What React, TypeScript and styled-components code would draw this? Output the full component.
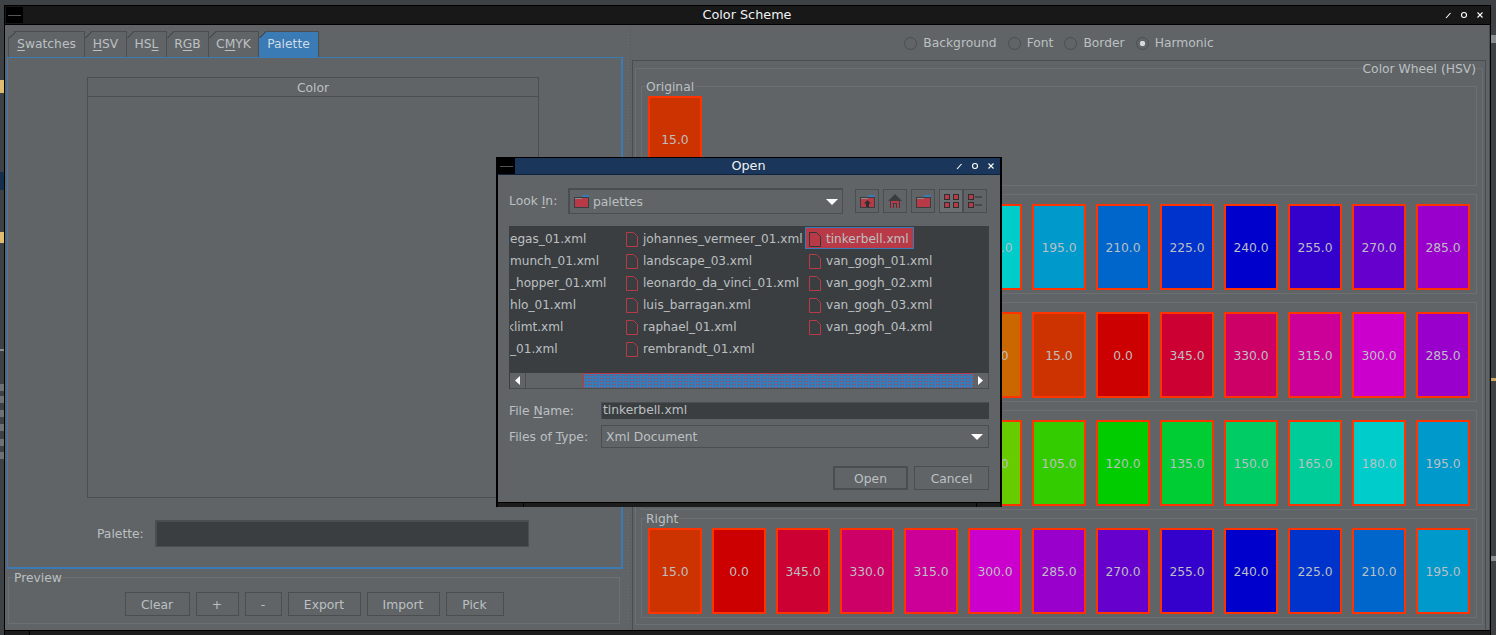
import { ReactNode } from 'react'
import styled, { createGlobalStyle } from 'styled-components'

const LINE = '#4a4e51'
const SOFT = '#6b6f72'
const BG = '#606467'
const DARK = '#3b3e41'
const BLUE = '#3a7ab5'
const RED = '#b83a46'
const TEXT = '#bcc0c2'

const hueColor = (hue: number) => {
  const channel = (n: number) => {
    const k = (n + hue / 60) % 6
    return Math.round(204 * (1 - Math.max(0, Math.min(k, 4 - k, 1))))
  }
  return `rgb(${channel(5)}, ${channel(3)}, ${channel(1)})`
}

const wheelRow = (start: number, step: number) =>
  Array.from({ length: 13 }, (_, i) => (start + step * i + 360) % 360)

// the first five swatches of these rows sit behind the Open dialog
const WHEEL_ROWS = [
  { label: '\u00a0', hues: wheelRow(105, 15), covered: 5 },
  { label: '\u00a0', hues: wheelRow(105, -15), covered: 5 },
  { label: '\u00a0', hues: wheelRow(15, 15), covered: 5 },
  { label: 'Right', hues: wheelRow(15, -15), covered: 0 },
]

const FILES = [
  { name: 'egas_01.xml', column: 0 },
  { name: 'munch_01.xml', column: 0 },
  { name: '_hopper_01.xml', column: 0 },
  { name: 'hlo_01.xml', column: 0 },
  { name: 'klimt.xml', column: 0, cut: true },
  { name: '_01.xml', column: 0 },
  { name: 'johannes_vermeer_01.xml', column: 1 },
  { name: 'landscape_03.xml', column: 1 },
  { name: 'leonardo_da_vinci_01.xml', column: 1 },
  { name: 'luis_barragan.xml', column: 1 },
  { name: 'raphael_01.xml', column: 1 },
  { name: 'rembrandt_01.xml', column: 1 },
  { name: 'tinkerbell.xml', column: 2, selected: true },
  { name: 'van_gogh_01.xml', column: 2 },
  { name: 'van_gogh_02.xml', column: 2 },
  { name: 'van_gogh_03.xml', column: 2 },
  { name: 'van_gogh_04.xml', column: 2 },
]

const AppIcon = () => (
  <svg width="17" height="16" viewBox="0 0 17 16">
    <rect width="17" height="16" fill="#000" />
    <rect x="2" y="8" width="13" height="1" fill="#555" />
  </svg>
)

const WindowButtons = () => (
  <svg width="44" height="10" viewBox="0 0 44 10" fill="none" stroke="#fff" strokeWidth="1.1">
    <path d="M2 8 L6.5 3" />
    <circle cx="20" cy="5" r="2.5" />
    <path d="M33.5 2.5 L38.5 7.5 M38.5 2.5 L33.5 7.5" />
  </svg>
)

const FolderIcon = ({ up }: { up?: boolean }) => (
  <svg width="15" height="13" viewBox="0 0 15 13">
    <path d="M8 0 H15 V3 H8 Z" fill={BLUE} />
    <rect x="0.5" y="2.5" width="14" height="10" fill={RED} stroke="#3a3d40" />
    <rect x="1" y="3" width="7" height="1" fill="#8a8d90" />
    {up && <path d="M7.5 5 L11 8.5 H9 V12 H6 V8.5 H4 Z" fill="#2c2e30" />}
  </svg>
)

const HomeIcon = () => (
  <svg width="16" height="16" viewBox="0 0 16 16">
    <path d="M8 1 L15 8 H13 V15 H3 V8 H1 Z" fill="#3a3d40" />
    <rect x="4" y="8" width="8" height="7" fill={RED} />
    <rect x="6" y="10" width="4" height="5" fill="#3a3d40" />
    <rect x="7" y="11" width="2" height="4" fill={BG} />
  </svg>
)

const GridIcon = () => (
  <svg width="15" height="14" viewBox="0 0 15 14" fill={RED} stroke="#2c2e30">
    <rect x="0.5" y="0.5" width="5" height="5" />
    <rect x="9.5" y="0.5" width="5" height="5" />
    <rect x="0.5" y="8.5" width="5" height="5" />
    <rect x="9.5" y="8.5" width="5" height="5" />
  </svg>
)

const ListIcon = () => (
  <svg width="15" height="14" viewBox="0 0 15 14" fill={RED} stroke="#2c2e30">
    <rect x="0.5" y="0.5" width="5" height="5" />
    <rect x="0.5" y="8.5" width="5" height="5" />
    <path d="M7 3 H14 M7 11 H14" fill="none" />
  </svg>
)

const FileIcon = ({ dark }: { dark?: boolean }) => (
  <svg width="12" height="15" viewBox="0 0 12 15" fill="none" stroke={dark ? '#33363a' : RED}>
    <path d="M0.5 0.5 H7.5 L11.5 4.5 V14.5 H0.5 Z" />
  </svg>
)

const ComboArrow = () => (
  <svg width="12" height="6" viewBox="0 0 12 6">
    <path d="M0 0 H12 L6 6 Z" fill="#fff" />
  </svg>
)

const ScrollArrow = ({ right }: { right?: boolean }) => (
  <svg width="5" height="9" viewBox="0 0 5 9">
    <path d={right ? 'M0 0 L5 4.5 L0 9 Z' : 'M5 0 L0 4.5 L5 9 Z'} fill="#fff" />
  </svg>
)

const SwatchRow = ({ hues, covered = 0 }: { hues: number[]; covered?: number }) => (
  <Swatches>
    {hues.map((hue, i) => (
      <Swatch key={i} $color={hueColor(hue)}>
        {i < covered ? null : hue.toFixed(1)}
      </Swatch>
    ))}
  </Swatches>
)

const WheelGroup = ({ label, children }: { label: string; children: ReactNode }) => (
  <GroupBox>
    <GroupLegend>{label}</GroupLegend>
    {children}
  </GroupBox>
)

const App = () => (
  <Desktop>
    <GlobalStyle />
    <LeftEdge>
      <Scrap $top={75} $height={13} $color="#e0bc70" />
      <Scrap $top={79} $height={18} $color="#14304c" />
      <Scrap $top={42} $height={11} $color="#e0bc70" />
      <Scrap $top={106} $height={2} $color="#8a8d90" />
      <Scrap $top={33} $height={7} $color="#6f7275" />
      <Scrap $top={5} $height={7} $color="#6f7275" />
      <Scrap $top={7} $height={7} $color="#6f7275" />
      <Scrap $top={7} $height={7} $color="#6f7275" />
      <Scrap $top={8} $height={7} $color="#6f7275" />
      <Scrap $top={6} $height={7} $color="#6f7275" />
    </LeftEdge>
    <Window>
      <TitleBar>
        <AppIcon />
        <TitleText>Color Scheme</TitleText>
        <WindowButtons />
      </TitleBar>
      <Body>
        <LeftPane>
          <Tabs>
            <Tab $width={77}><u>S</u>watches</Tab>
            <Tab $width={42}><u>H</u>SV</Tab>
            <Tab $width={40}>HS<u>L</u></Tab>
            <Tab $width={42}>R<u>G</u>B</Tab>
            <Tab $width={50}>C<u>M</u>YK</Tab>
            <Tab $width={60} $active>Palette</Tab>
          </Tabs>
          <TabPanel>
            <ColorTable>
              <TableHeader>Color</TableHeader>
            </ColorTable>
            <PaletteRow>
              <PaletteLabel>Palette:</PaletteLabel>
              <PaletteInput />
            </PaletteRow>
          </TabPanel>
          <PreviewBox>
            <PreviewLegend>Preview</PreviewLegend>
            <Button $width={65}>Clear</Button>
            <Button $width={43}>+</Button>
            <Button $width={37}>-</Button>
            <Button $width={73}>Export</Button>
            <Button $width={73}>Import</Button>
            <Button $width={58}>Pick</Button>
          </PreviewBox>
        </LeftPane>
        <Splitter />
        <RightPane>
          <RadioRow>
            <Radio>Background</Radio>
            <Radio>Font</Radio>
            <Radio>Border</Radio>
            <Radio $checked>Harmonic</Radio>
          </RadioRow>
          <WheelPanel>
            <WheelBox>
              <WheelLegend>Color Wheel (HSV)</WheelLegend>
              <WheelGroup label="Original">
                <SwatchRow hues={[15]} />
              </WheelGroup>
              {WHEEL_ROWS.map((row, i) => (
                <WheelGroup key={i} label={row.label}>
                  <SwatchRow hues={row.hues} covered={row.covered} />
                </WheelGroup>
              ))}
            </WheelBox>
          </WheelPanel>
        </RightPane>
      </Body>
      <BottomBar />
    </Window>
    <RightEdge>
      <Scrap $top={35} $height={8} $color="#8a8d90" />
      <Scrap $top={335} $height={3} $color="#c9a860" />
      <Scrap $top={175} $height={5} $color="#8a8d90" />
    </RightEdge>

    <Dialog>
      <DialogTitle>
        <AppIcon />
        <TitleText>Open</TitleText>
        <WindowButtons />
      </DialogTitle>
      <DialogBody>
        <LookInRow>
          <FieldLabel $width={59}>Look <u>I</u>n:</FieldLabel>
          <LookInCombo>
            <FolderIcon />
            <ComboText>palettes</ComboText>
            <ComboArrow />
          </LookInCombo>
          <ToolGroup>
            <ToolButton><FolderIcon up /></ToolButton>
            <ToolButton><HomeIcon /></ToolButton>
            <ToolButton><FolderIcon /></ToolButton>
          </ToolGroup>
          <ViewGroup>
            <ToolButton $active><GridIcon /></ToolButton>
            <ToolButton><ListIcon /></ToolButton>
          </ViewGroup>
        </LookInRow>
        <FileList>
          <FileGrid>
            {FILES.map(file => (
              <FileCell key={file.name} $column={file.column} $selected={file.selected}>
                {file.column > 0 && <FileIcon dark={file.selected} />}
                <FileName $cut={file.cut}>{file.name}</FileName>
              </FileCell>
            ))}
          </FileGrid>
          <ScrollBar>
            <ScrollButton><ScrollArrow /></ScrollButton>
            <ScrollTrack />
            <ScrollThumb />
            <ScrollButton><ScrollArrow right /></ScrollButton>
          </ScrollBar>
        </FileList>
        <FileNameRow>
          <FieldLabel $width={92}>File <u>N</u>ame:</FieldLabel>
          <FileNameInput>tinkerbell.xml</FileNameInput>
        </FileNameRow>
        <TypeRow>
          <FieldLabel $width={92}>Files of <u>T</u>ype:</FieldLabel>
          <TypeCombo>
            <span>Xml Document</span>
            <ComboArrow />
          </TypeCombo>
        </TypeRow>
        <DialogActions>
          <Button $width={75} $default>Open</Button>
          <Button $width={75}>Cancel</Button>
        </DialogActions>
      </DialogBody>
      <DialogBottom />
    </Dialog>
  </Desktop>
)

export default App

const GlobalStyle = createGlobalStyle`
  html, body {
    margin: 0;
    padding: 0;
    background: ${DARK};
  }
  * {
    box-sizing: border-box;
  }
  u {
    text-underline-offset: 2px;
  }
`

const Desktop = styled.div`
  position: relative;
  display: flex;
  width: 1496px;
  height: 635px;
  overflow: hidden;
  background: #3f4245;
  font-family: 'DejaVu Sans', sans-serif;
  font-size: 12.3px;
  line-height: 14px;
  color: ${TEXT};
`

const LeftEdge = styled.div`
  display: flex;
  flex-direction: column;
  width: 4px;
  padding-top: 5px;
`

const Scrap = styled.div<{ $top: number; $height: number; $color: string }>`
  margin-top: ${p => p.$top}px;
  height: ${p => p.$height}px;
  background: ${p => p.$color};
`

const RightEdge = styled.div`
  display: flex;
  flex-direction: column;
  flex: 1;
`

const Window = styled.div`
  display: flex;
  flex-direction: column;
  width: 1487px;
  height: 630px;
  margin-top: 5px;
  border-left: 1px solid #000;
  border-right: 1px solid #000;
  border-top: 1px solid #000;
  background: ${BG};
`

const TitleBar = styled.div`
  display: grid;
  grid-template-columns: 1fr auto 1fr;
  align-items: center;
  flex: none;
  height: 19px;
  padding: 0 2px 0 1px;
  background: #181818;
  border-bottom: 1px solid #000;

  & > svg:last-child {
    justify-self: end;
  }
`

const TitleText = styled.div`
  text-align: center;
  color: #f0f2f4;
  font-size: 12.8px;
`

const Body = styled.div`
  display: flex;
  flex: 1;
  min-height: 0;
  padding-right: 1px;
  border-right: 1px solid ${LINE};
`

const LeftPane = styled.div`
  display: flex;
  flex-direction: column;
  flex: none;
  width: 624px;
  padding: 6px 6px 0 2px;
`

const Tabs = styled.div`
  display: flex;
  flex: none;
  height: 26px;
  padding-left: 1px;
`

const Tab = styled.div<{ $active?: boolean; $width: number }>`
  position: relative;
  display: flex;
  align-items: center;
  justify-content: center;
  flex: none;
  width: ${p => p.$width}px;
  padding-bottom: 2px;
  border-top: 1px solid ${LINE};
  border-right: 1px solid ${LINE};
  background: ${p => (p.$active ? BLUE : 'transparent')};
  color: ${p => (p.$active ? '#cfdbe6' : TEXT)};
  clip-path: polygon(6px 0, 100% 0, 100% 100%, 0 100%, 0 6px);

  &:first-child {
    border-left: 1px solid ${LINE};
  }

  &::before {
    content: '';
    position: absolute;
    top: -1px;
    left: 0;
    width: 7px;
    height: 7px;
    background: linear-gradient(135deg, transparent 48%, ${LINE} 48%, ${LINE} 62%, transparent 62%);
  }
`

const TabPanel = styled.div`
  display: flex;
  flex-direction: column;
  flex: none;
  height: 512px;
  padding: 19px 0 0 79px;
  border: 1px solid ${BLUE};
  border-bottom-width: 2px;
  border-right-width: 2px;
`

const ColorTable = styled.div`
  flex: none;
  width: 452px;
  height: 421px;
  border: 1px solid ${LINE};
`

const TableHeader = styled.div`
  height: 19px;
  padding-top: 1px;
  line-height: 19px;
  text-align: center;
  border-bottom: 1px solid ${LINE};
`

const PaletteRow = styled.div`
  display: flex;
  align-items: center;
  gap: 10px;
  margin: 22px 0 0 10px;
`

const PaletteLabel = styled.div`
  width: 48px;
`

const PaletteInput = styled.div`
  width: 374px;
  height: 27px;
  background: ${DARK};
  border: 1px solid ${LINE};
  border-top-width: 2px;
  border-left-width: 2px;
`

const PreviewBox = styled.fieldset`
  display: flex;
  justify-content: center;
  gap: 6px;
  flex: none;
  height: 54px;
  margin: 1px 3px 0 1px;
  padding: 7px 0 0;
  border: 1px solid ${SOFT};
  min-width: 0;
`

const PreviewLegend = styled.legend`
  margin-left: 4px;
  padding: 1px 1px 0;
  line-height: 14px;
`

const Button = styled.div<{ $width: number; $default?: boolean }>`
  display: flex;
  align-items: center;
  justify-content: center;
  flex: none;
  width: ${p => p.$width}px;
  height: 24px;
  padding-top: 2px;
  border: ${p => (p.$default ? 2 : 1)}px solid ${LINE};
`

const Splitter = styled.div`
  flex: none;
  width: 3px;
  background-image: radial-gradient(#54585b 0.6px, transparent 0.8px);
  background-size: 3px 3px;
`

const RightPane = styled.div`
  display: flex;
  flex-direction: column;
  flex: none;
  width: 854px;
`

const RadioRow = styled.div`
  display: flex;
  align-items: center;
  justify-content: center;
  gap: 11px;
  flex: none;
  height: 35px;
  padding-top: 1px;
`

const Radio = styled.div<{ $checked?: boolean }>`
  display: flex;
  align-items: center;

  &::before {
    content: '';
    flex: none;
    width: 11px;
    height: 11px;
    margin-right: 6px;
    border-radius: 50%;
    border: 1px solid ${LINE};
    background: ${p => (p.$checked ? `radial-gradient(#d4d8da 2.5px, ${BG} 3px)` : 'transparent')};
  }
`

const WheelPanel = styled.div`
  flex: 1;
  padding: 0 2px;
  border-top: 1px solid ${LINE};
  border-left: 1px solid ${LINE};
  border-right: 1px solid ${LINE};
`

const WheelBox = styled.fieldset`
  height: 564px;
  margin: 0;
  padding: 3px 5px 0;
  border: 1px solid ${SOFT};
  min-width: 0;
`

const WheelLegend = styled.legend`
  margin-left: auto;
  padding: 1px 1px 0;
  line-height: 14px;
`

const GroupBox = styled.fieldset`
  height: 107px;
  margin: 0 0 1px;
  padding: 2px 0 0;
  border: 1px solid ${SOFT};
  min-width: 0;
`

const GroupLegend = styled.legend`
  margin-left: 3px;
  padding: 1px 1px 0;
  line-height: 14px;
`

const Swatches = styled.div`
  display: flex;
  gap: 10px;
  padding-left: 6px;
`

const Swatch = styled.div<{ $color: string }>`
  display: flex;
  align-items: center;
  justify-content: center;
  flex: none;
  width: 54px;
  height: 86px;
  padding-top: 2px;
  background: ${p => p.$color};
  border: 2px solid #ff3300;
`

const BottomBar = styled.div`
  flex: none;
  height: 5px;
  background: linear-gradient(90deg, transparent 24px, #000 24px, #000 25px, transparent 25px), #1c1c1c;
  border-top: 1px solid #000;
`

const Dialog = styled.div`
  position: absolute;
  left: 496px;
  top: 157px;
  display: flex;
  flex-direction: column;
  width: 506px;
  height: 350px;
  border: 2px solid #000;
  border-top-width: 1px;
  border-bottom: none;
  background: ${BG};
`

const DialogTitle = styled.div`
  display: grid;
  grid-template-columns: 1fr auto 1fr;
  align-items: center;
  flex: none;
  height: 17px;
  padding-right: 1px;
  background: #1a365a;
  border-bottom: 1px solid #10233c;

  & > svg:last-child {
    justify-self: end;
  }
`

const DialogBody = styled.div`
  flex: 1;
  padding: 13px 11px 0;
`

const LookInRow = styled.div`
  display: flex;
  align-items: center;
  height: 26px;
`

const FieldLabel = styled.div<{ $width: number }>`
  flex: none;
  width: ${p => p.$width}px;
`

const LookInCombo = styled.div`
  display: flex;
  align-items: center;
  flex: none;
  width: 275px;
  height: 26px;
  padding: 0 4px;
  border: 1px solid ${LINE};
  border-top-width: 2px;
  border-left-width: 2px;
`

const ComboText = styled.span`
  flex: 1;
  margin-left: 4px;
`

const ToolGroup = styled.div`
  display: flex;
  gap: 4px;
  margin-left: 12px;
`

const ViewGroup = styled.div`
  display: flex;
  margin-left: 4px;
`

const ToolButton = styled.div<{ $active?: boolean }>`
  display: flex;
  align-items: center;
  justify-content: center;
  width: 24px;
  height: 24px;
  border: 1px solid ${LINE};
  background: ${p => (p.$active ? '#6b6f72' : 'transparent')};
`

const FileList = styled.div`
  display: flex;
  flex-direction: column;
  height: 163px;
  margin-top: 12px;
  background: ${DARK};
`

const FileGrid = styled.div`
  display: grid;
  flex: 1;
  grid-auto-flow: column;
  grid-template-rows: repeat(6, 22px);
  grid-template-columns: 115px 180px 1fr;
  padding: 1px 0 0 1px;
  overflow: hidden;
  font-size: 12.1px;
`

const FileCell = styled.div<{ $column: number; $selected?: boolean }>`
  display: flex;
  align-items: center;
  gap: 5px;
  min-width: 0;
  overflow: hidden;
  padding-top: 2px;
  padding-left: ${p => [0, 1, 4][p.$column]}px;
  ${p =>
    p.$selected &&
    `
    justify-self: start;
    padding-right: 4px;
    padding-left: 3px;
    background: ${RED};
    border: 1px solid ${BLUE};
  `}
`

const FileName = styled.span<{ $cut?: boolean }>`
  white-space: nowrap;
  margin-left: ${p => (p.$cut ? -3 : 0)}px;
`

const ScrollBar = styled.div`
  display: flex;
  flex: none;
  height: 16px;
  margin-left: 1px;
  background: ${BG};
  border-bottom: 1px solid ${LINE};
`

const ScrollButton = styled.div`
  display: flex;
  align-items: center;
  justify-content: center;
  flex: none;
  width: 16px;
  border-right: 1px solid ${LINE};
`

const ScrollTrack = styled.div`
  flex: none;
  width: 57px;
`

const ScrollThumb = styled.div`
  flex: 1;
  background: radial-gradient(${RED} 0.7px, transparent 0.9px) 0 0 / 3px 3px, ${BLUE};
  border-top: 1px solid ${RED};
  border-left: 1px solid ${RED};
`

const FileNameRow = styled.div`
  display: flex;
  align-items: center;
  margin-top: 13px;
  height: 17px;
`

const FileNameInput = styled.div`
  flex: 1;
  height: 17px;
  padding-left: 1px;
  line-height: 15px;
  background: ${DARK};
  border-top: 1px solid ${LINE};
  border-left: 1px solid ${LINE};
`

const TypeRow = styled.div`
  display: flex;
  align-items: center;
  margin-top: 6px;
  height: 23px;
`

const TypeCombo = styled.div`
  display: flex;
  align-items: center;
  justify-content: space-between;
  flex: 1;
  height: 23px;
  padding: 0 5px 0 4px;
  border: 1px solid ${LINE};
`

const DialogActions = styled.div`
  display: flex;
  justify-content: flex-end;
  gap: 6px;
  margin-top: 18px;
`

const DialogBottom = styled.div`
  flex: none;
  height: 5px;
  background: linear-gradient(90deg, transparent 25px, #000 25px, #000 26px, transparent 26px, transparent 478px, #000 478px, #000 479px, transparent 479px), #1c1c1c;
  border-top: 1px solid #000;
`
